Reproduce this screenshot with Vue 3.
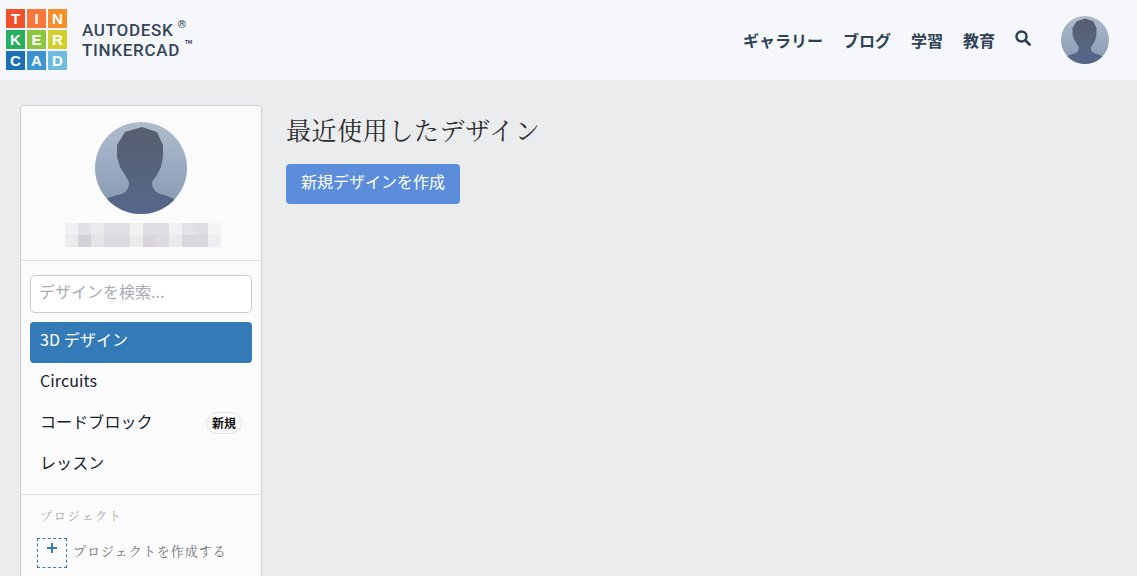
<template>
  <div class="page">
    <header class="topbar">
      <div class="brand">
        <div class="logo">
          <span v-for="cell in logoCells" :key="cell.letter + cell.color" :style="{ background: cell.color }">{{ cell.letter }}</span>
        </div>
        <div class="wordmark">
          <div>AUTODESK<sup class="reg">®</sup></div>
          <div>TINKERCAD<sup class="tm">™</sup></div>
        </div>
      </div>
      <nav class="nav">
        <a v-for="link in navLinks" :key="link">{{ link }}</a>
        <svg class="search" width="16" height="16" viewBox="0 0 16 16">
          <circle cx="6.5" cy="6.5" r="5" fill="none" stroke="#2f4256" stroke-width="2.5" />
          <path d="M10.5 10.5l4 4" stroke="#2f4256" stroke-width="2.8" stroke-linecap="round" />
        </svg>
        <svg class="avatar-small" viewBox="0 0 92 92">
          <use href="#person" />
        </svg>
      </nav>
    </header>

    <main class="content">
      <aside class="sidebar">
        <div class="profile">
          <svg class="avatar-large" viewBox="0 0 92 92">
            <defs>
              <linearGradient id="sky" x1="0" y1="0" x2="0" y2="1">
                <stop offset="0" stop-color="#afbccd" />
                <stop offset="1" stop-color="#8497b2" />
              </linearGradient>
              <linearGradient id="body" x1="0" y1="0" x2="0" y2="1">
                <stop offset="0" stop-color="#575f6e" />
                <stop offset="1" stop-color="#55678a" />
              </linearGradient>
              <clipPath id="disc"><circle cx="46" cy="46" r="46" /></clipPath>
              <g id="person">
                <g clip-path="url(#disc)">
                  <rect width="92" height="92" fill="url(#sky)" />
                  <path d="M30 10L47 5l15 5 6 13v12l-2 10-4 8-5 7c0 8 5 12 13 13l9 4 13 15H0l13-16 9-3c8-1 12-5 12-13l-4-7-5-8-3-10V23z" fill="url(#body)" />
                </g>
              </g>
            </defs>
            <use href="#person" />
          </svg>
          <div class="mosaic">
            <i v-for="(shade, i) in mosaic" :key="i" :style="{ background: shade }"></i>
          </div>
        </div>

        <div class="menu">
          <input class="search-input" type="text" placeholder="デザインを検索...">
          <a
              v-for="item in menuItems"
              :key="item.label"
              class="menu-item"
              :class="{ active: item.active }"
          >
            {{ item.label }}
            <span v-if="item.badge" class="badge">{{ item.badge }}</span>
          </a>
        </div>

        <div class="projects">
          <div class="projects-title">プロジェクト</div>
          <div class="project-new">
            <span class="plus-box">
              <svg width="10" height="10" viewBox="0 0 10 10"><path d="M5 0v10M0 5h10" stroke="#337ab7" stroke-width="2" /></svg>
            </span>
            <span class="project-label">プロジェクトを作成する</span>
          </div>
        </div>
      </aside>

      <section class="designs">
        <h1>最近使用したデザイン</h1>
        <button class="create">新規デザインを作成</button>
      </section>
    </main>
  </div>
</template>

<script setup>
const logoCells = [
  { letter: 'T', color: '#f0512c' },
  { letter: 'I', color: '#f9763a' },
  { letter: 'N', color: '#f98d2b' },
  { letter: 'K', color: '#27ae5f' },
  { letter: 'E', color: '#8cc63f' },
  { letter: 'R', color: '#cfd02e' },
  { letter: 'C', color: '#1b6fb5' },
  { letter: 'A', color: '#3d94d0' },
  { letter: 'D', color: '#6dbce2' }
]

const navLinks = ['ギャラリー', 'ブログ', '学習', '教育']

const menuItems = [
  { label: '3D デザイン', active: true },
  { label: 'Circuits' },
  { label: 'コードブロック', badge: '新規' },
  { label: 'レッスン' }
]

// blurred-out user name, 12 x 2 blocks
const mosaic = [
  '#f1f1f3', '#e2e1e5', '#eaeaed', '#e1e0e4', '#e1e0e4', '#f2f2f4', '#dfdde2', '#dfdee3', '#f2f2f4', '#e3e2e6', '#dedde1', '#f4f4f6',
  '#ebebed', '#d2d1d6', '#e4e4e7', '#dbdadf', '#dbdadf', '#ebebee', '#d9d6db', '#dcdbe0', '#ebebee', '#d8d7dc', '#d8d7dc', '#efeff1'
]
</script>

<style>
html, body {
  margin: 0;
  background: #ebecee;
  overflow: hidden;
}
</style>

<style scoped>
.page {
  height: 576px;
  overflow: hidden;
  font-family: "Noto Sans CJK JP", "Noto Sans", sans-serif;
}

.topbar {
  height: 80px;
  background: #f6f7fa;
  display: flex;
  justify-content: space-between;
  align-items: center;
  padding: 0 28px 0 6px;
  color: #2f4256;
}

.brand {
  display: flex;
  align-items: center;
  gap: 15px;
  margin-top: -1px;
}

.logo {
  display: grid;
  grid-template-columns: repeat(3, 19px);
  grid-auto-rows: 19px;
  gap: 2px;
}

.logo span {
  display: flex;
  align-items: center;
  justify-content: center;
  color: #fff;
  font: bold 15px "Liberation Sans", sans-serif;
}

.wordmark {
  font: 500 17px/20px Roboto, sans-serif;
  letter-spacing: 0.7px;
  color: #34465c;
}

.wordmark sup {
  line-height: 0;
}

.reg {
  font-size: 11px;
  margin-left: 4px;
  vertical-align: 8px;
}

.tm {
  font-size: 14px;
  margin-left: 4px;
  vertical-align: 6px;
}

.nav {
  display: flex;
  align-items: center;
  font-size: 16px;
  font-weight: 700;
}

.nav a {
  margin-right: 20px;
  line-height: 24px;
}

.search {
  margin: -4px 0 0 0;
}

.avatar-small {
  width: 48px;
  height: 48px;
  margin-left: 30px;
}

.content {
  display: flex;
  align-items: flex-start;
  padding: 25px 0 0 20px;
  gap: 24px;
}

.sidebar {
  width: 240px;
  height: 520px;
  background: #fbfbfb;
  border: 1px solid #cdd0d6;
  border-radius: 4px;
  flex-shrink: 0;
}

.profile {
  border-bottom: 1px solid #dfe0e3;
  display: flex;
  flex-direction: column;
  align-items: center;
  padding-top: 16px;
  height: 138px;
}

.avatar-large {
  width: 92px;
  height: 92px;
  display: block;
}

.mosaic {
  display: grid;
  grid-template-columns: repeat(12, 13px);
  grid-auto-rows: 12px;
  margin: 9px 0 0 4px;
}

.menu {
  padding: 14px 9px 8px;
  border-bottom: 1px solid #dfe0e3;
}

.search-input {
  display: block;
  width: 100%;
  height: 38px;
  box-sizing: border-box;
  border: 1px solid #ccc;
  border-radius: 5px;
  padding: 0 8px 7px;
  margin-bottom: 9px;
  font: 16px "Noto Sans CJK JP", sans-serif;
  background: #fff;
}

.search-input::placeholder {
  color: #a9acb2;
}

.menu-item {
  display: flex;
  justify-content: space-between;
  align-items: center;
  height: 41px;
  box-sizing: border-box;
  padding: 0 10px 7px;
  border-radius: 4px;
  font-size: 16px;
  letter-spacing: 0.1px;
  color: #16202c;
}

.menu-item.active {
  background: #337ab7;
  color: #fff;
}

.badge {
  font-size: 12px;
  font-weight: 700;
  line-height: 18px;
  letter-spacing: 0;
  padding: 1px 5px;
  margin-top: 4px;
  border: 1px solid #e4e4e6;
  border-radius: 11px;
  color: #111;
  background: #fbfbfb;
}

.projects {
  padding: 11px 19px 0 16px;
}

.projects-title {
  font-family: "Noto Serif CJK JP", serif;
  font-size: 12px;
  line-height: 20px;
  letter-spacing: 1.8px;
  color: #a5a7ac;
  margin-left: 3px;
}

.project-new {
  display: flex;
  align-items: center;
  gap: 6px;
  margin-top: 12px;
}

.project-label {
  font-family: "Noto Serif CJK JP", serif;
  font-size: 13px;
  line-height: 20px;
  letter-spacing: 1px;
  color: #6f7278;
  margin-top: -4px;
}

.plus-box {
  width: 28px;
  height: 24px;
  border: 1px dashed #337ab7;
  display: flex;
  justify-content: center;
  padding-top: 4px;
}

.designs {
  padding-top: 7px;
}

h1 {
  margin: 0 0 18px;
  font-family: "Noto Serif CJK JP", serif;
  font-size: 25px;
  line-height: 34px;
  font-weight: 400;
  letter-spacing: 0.6px;
  color: #2d2d2d;
}

.create {
  display: block;
  width: 174px;
  height: 40px;
  border: 0;
  border-radius: 4px;
  padding: 0 0 7px;
  background: #5b8ddb;
  color: #fff;
  font: 16px "Noto Sans CJK JP", sans-serif;
}
</style>
